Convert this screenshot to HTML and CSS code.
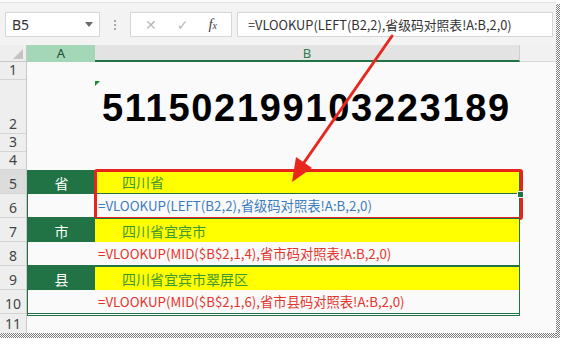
FILE: index.html
```html
<!DOCTYPE html>
<html lang="zh-CN">
<head>
    <meta charset="UTF-8">
    <title>VLOOKUP 身份证号码查询</title>
    <link rel="stylesheet" href="styles.css">
</head>
<body>
<div class="screen">
    <div class="window">
        <div class="toolbar">
            <div class="name-box">
                <span>B5</span>
                <span class="caret"></span>
            </div>
            <div class="grip"><i></i><i></i><i></i></div>
            <div class="fx-box">
                <span class="cancel">✕</span>
                <span class="enter">✓</span>
                <span class="fx">f<em>x</em></span>
            </div>
            <div class="formula-box">=VLOOKUP(LEFT(B2,2),省级码对照表!A:B,2,0)</div>
        </div>

        <div class="col-heads">
            <div class="corner"><span class="corner-tri"></span></div>
            <div class="col-head col-a">A</div>
            <div class="col-head col-b">B</div>
            <div class="col-rest"></div>
        </div>

        <div class="sheet">
            <div class="row-heads">
                <div class="rh h18">1</div>
                <div class="rh h54">2</div>
                <div class="rh h18">3</div>
                <div class="rh h18">4</div>
                <div class="rh h24 active">5</div>
                <div class="rh h24">6</div>
                <div class="rh h24">7</div>
                <div class="rh h24">8</div>
                <div class="rh h24">9</div>
                <div class="rh h24">10</div>
                <div class="rh last">11</div>
            </div>

            <div class="cells">
                <div class="row h18"></div>
                <div class="row h54">
                    <div class="cell a"></div>
                    <div class="cell b id-number"><span class="text-flag"></span>511502199103223189</div>
                </div>
                <div class="row h18"></div>
                <div class="row h18"></div>

                <div class="block">
                    <div class="row split">
                        <div class="cell a label">省</div>
                        <div class="cell b result">四川省</div>
                    </div>
                    <div class="row">
                        <div class="cell a"></div>
                        <div class="cell b formula blue">=VLOOKUP(LEFT(B2,2),省级码对照表!A:B,2,0)</div>
                    </div>
                    <div class="selection"></div>
                    <div class="fill-handle"></div>
                </div>

                <div class="block">
                    <div class="row">
                        <div class="cell a label">市</div>
                        <div class="cell b result">四川省宜宾市</div>
                    </div>
                    <div class="row">
                        <div class="cell a"></div>
                        <div class="cell b formula red">=VLOOKUP(MID($B$2,1,4),省市码对照表!A:B,2,0)</div>
                    </div>
                </div>

                <div class="block last-block">
                    <div class="row">
                        <div class="cell a label">县</div>
                        <div class="cell b result">四川省宜宾市翠屏区</div>
                    </div>
                    <div class="row">
                        <div class="cell a"></div>
                        <div class="cell b formula red">=VLOOKUP(MID($B$2,1,6),省市县码对照表!A:B,2,0)</div>
                    </div>
                </div>
            </div>
        </div>

        <!-- 箭头：从编辑栏指向选中的单元格 -->
        <svg class="arrow" width="556" height="333" viewBox="0 0 556 333">
            <line x1="392" y1="36" x2="303" y2="164" stroke="#e8281e" stroke-width="3" stroke-linecap="round"/>
            <polygon points="292,182 296,157 312,168" fill="#e8281e"/>
        </svg>
    </div>
    <div class="shade-right"></div>
    <div class="shade-bottom"></div>
</div>
</body>
</html>
```

FILE: styles.css
```css
:root {
    --excel-green: #217346;
    --header-bg: #eeeeee;
    --sheet-bg: #fafafa;
    --line: #d4d4d4;
    --cjk: "Noto Sans CJK SC", "Noto Sans", sans-serif;
}
body {
    margin: 0;
    background: #ffffff;
    font-family: var(--cjk);
    color: #333;
    overflow: hidden;
}
.screen {
    display: grid;
    grid-template-columns: 556px 4px;
    grid-template-rows: 333px 5px;
    width: 565px;
    height: 345px;
}
.window {
    position: relative;
    grid-row: 1;
    grid-column: 1;
    background: var(--sheet-bg);
    overflow: hidden;
    display: flex;
    flex-direction: column;
}
.shade-right {
    grid-row: 1 / 3;
    grid-column: 2;
    margin-top: 4px;
    background: repeating-conic-gradient(#7c7c7c 0 25%, #ffffff 0 50%) 0 0 / 2px 2px;
}
.shade-bottom {
    grid-row: 2;
    grid-column: 1;
    background: repeating-conic-gradient(#7c7c7c 0 25%, #ffffff 0 50%) 0 0 / 2px 2px;
}

/* 编辑栏 */
.toolbar {
    box-sizing: border-box;
    background: #f3f3f3;
    border-top: 1px solid #e2e2e2;
    margin-top: 2px;
    height: 45px;
    padding: 9px 3px 0 5px;
    display: flex;
    align-items: flex-start;
}
.name-box, .fx-box, .formula-box {
    height: 25px;
    box-sizing: border-box;
    background: #ffffff;
    border: 1px solid #d6d6d6;
    display: flex;
    align-items: center;
}
.name-box {
    width: 95px;
    padding: 0 6px;
    justify-content: space-between;
    font-family: "Noto Sans", sans-serif;
    font-size: 14px;
    color: #333;
}
.caret {
    width: 0;
    height: 0;
    border-left: 4px solid transparent;
    border-right: 4px solid transparent;
    border-top: 5px solid #6a6a6a;
}
.grip {
    width: 30px;
    height: 25px;
    display: flex;
    flex-direction: column;
    align-items: center;
    justify-content: center;
    gap: 2px;
}
.grip i {
    width: 2px;
    height: 2px;
    background: #a8a8a8;
}
.fx-box {
    width: 102px;
    justify-content: space-around;
    padding: 0 4px;
}
.cancel, .enter {
    color: #b9b9b9;
    font-family: "DejaVu Sans", sans-serif;
    font-size: 14px;
}
.fx {
    font-family: "Liberation Serif", serif;
    font-style: italic;
    font-size: 15px;
    color: #444;
}
.fx em {
    font-size: 10px;
}
.formula-box {
    flex: 1;
    margin-left: 5px;
    padding-left: 10px;
    font-size: 12.8px;
    color: #333;
    white-space: nowrap;
}

/* 列标题 */
.col-heads {
    display: flex;
    height: 17px;
    font-family: "Noto Sans", sans-serif;
    font-size: 13px;
    line-height: 17px;
}
.corner {
    width: 27px;
    box-sizing: border-box;
    background: var(--header-bg);
    border-right: 1px solid #c8c8c8;
    border-bottom: 1px solid #c8c8c8;
    position: relative;
}
.corner-tri {
    position: absolute;
    right: 3px;
    bottom: 2px;
    width: 0;
    height: 0;
    border-left: 10px solid transparent;
    border-bottom: 10px solid #c3c3c3;
}
.col-head {
    box-sizing: border-box;
    text-align: center;
}
.col-a {
    width: 68px;
    background: #a3d7b8;
    color: #1f4d33;
}
.col-b {
    width: 425px;
    background: #e3e3e3;
    color: #2e7d4f;
    border-bottom: 2px solid var(--excel-green);
    border-right: 1px solid #cfcfcf;
}
.col-rest {
    flex: 1;
    background: #f1f1f1;
    border-bottom: 1px solid #dadada;
}

/* 表格 */
.sheet {
    display: flex;
    flex: 1;
}
.row-heads {
    width: 27px;
    display: flex;
    flex-direction: column;
    background: var(--header-bg);
    border-right: 1px solid #c8c8c8;
    box-sizing: border-box;
}
.rh {
    box-sizing: border-box;
    border-bottom: 1px solid var(--line);
    display: flex;
    align-items: flex-end;
    justify-content: center;
    font-family: "Noto Sans", sans-serif;
    font-size: 14px;
    line-height: 19px;
    color: #444;
}
.rh.active {
    background: #dcdcdc;
}
.rh.last {
    flex: 1;
    border-bottom: none;
}
.h18 { height: 18px; }
.h24 { height: 24px; }
.h54 { height: 54px; }

.cells {
    width: 493px;
    display: flex;
    flex-direction: column;
}
.row {
    display: flex;
}
.cell.a {
    width: 68px;
}
.cell.b {
    flex: 1;
    position: relative;
}
.id-number {
    display: flex;
    align-items: flex-end;
    padding: 0 0 7px 7px;
    font-family: "Liberation Sans", Arial, sans-serif;
    font-weight: bold;
    font-size: 38px;
    line-height: 38px;
    letter-spacing: 1.7px;
    color: #000;
}
.text-flag {
    position: absolute;
    top: 1px;
    left: 0;
    width: 0;
    height: 0;
    border-top: 5px solid #1a8a2a;
    border-right: 5px solid transparent;
}

.block {
    position: relative;
    height: 48px;
    box-sizing: border-box;
    border: 1px solid var(--excel-green);
    display: flex;
    flex-direction: column;
}
.block .row {
    flex: 1;
}
.block .cell.a {
    width: 67px;
}
.block .row.split .cell.b {
    border-bottom: 1px solid var(--excel-green);
}
.last-block {
    border-bottom: 3px double var(--excel-green);
    height: 50px;
}
.label {
    background: var(--excel-green);
    color: #ffffff;
    font-size: 14px;
    display: flex;
    align-items: center;
    justify-content: center;
}
.result {
    background: #ffff00;
    color: #3d9a2c;
    font-size: 14px;
    display: flex;
    align-items: center;
    padding-left: 27px;
}
.formula {
    display: flex;
    align-items: center;
    padding-left: 3px;
    font-size: 13.3px;
    white-space: nowrap;
}
.formula.blue { color: #3a7cc0; }
.formula.red { color: #e6342c; }

.selection {
    position: absolute;
    left: 66px;
    top: -2px;
    width: 429px;
    height: 51px;
    box-sizing: border-box;
    border: 3px solid #e8231c;
    border-radius: 3px;
}
.fill-handle {
    position: absolute;
    left: 489px;
    top: 20px;
    width: 5px;
    height: 5px;
    background: var(--excel-green);
    border: 1px solid #ffffff;
}
.arrow {
    position: absolute;
    left: 0;
    top: 0;
    pointer-events: none;
}
```
